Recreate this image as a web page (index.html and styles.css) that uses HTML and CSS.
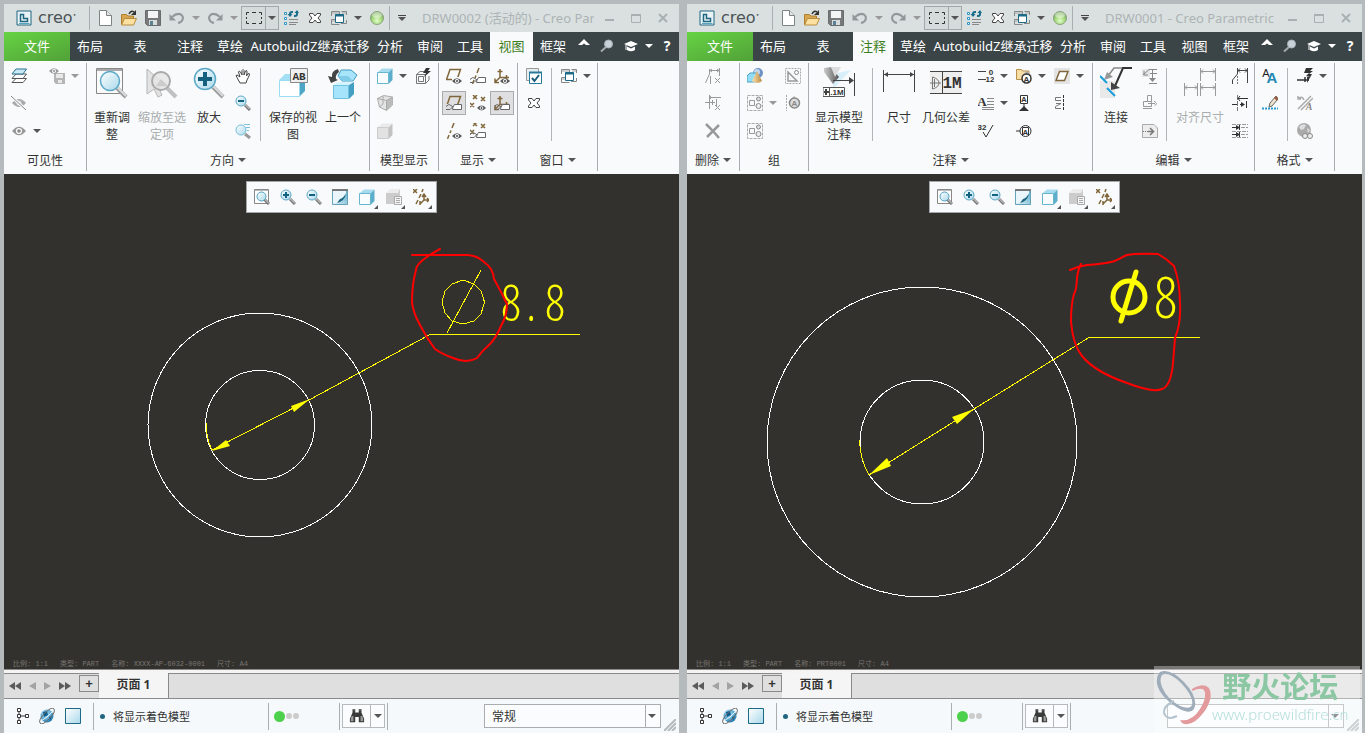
FILE: index.html
```html
<!DOCTYPE html>
<html lang="zh-CN">
<head>
<meta charset="utf-8">
<title>Creo Parametric</title>
<link rel="stylesheet" href="styles.css">
</head>
<body>
<svg class="sprite" aria-hidden="true">
<defs>
<linearGradient id="gBlue" x1="0" y1="0" x2="1" y2="1"><stop offset="0" stop-color="#fff"/><stop offset="1" stop-color="#a9d8ea"/></linearGradient>
<linearGradient id="gTeal" x1="0" y1="1" x2="1" y2="0"><stop offset="0" stop-color="#e8f6fb"/><stop offset="1" stop-color="#4fa5c4"/></linearGradient>
<radialGradient id="gBall" cx=".5" cy=".7" r=".6"><stop offset="0" stop-color="#e4fbd0"/><stop offset=".6" stop-color="#a5db7c"/><stop offset="1" stop-color="#7fae66"/></radialGradient>
<radialGradient id="gGlobe" cx=".4" cy=".35" r=".7"><stop offset="0" stop-color="#b7e8fa"/><stop offset="1" stop-color="#1c77b0"/></radialGradient>
<linearGradient id="gCone" x1="0" x2="1"><stop offset="0" stop-color="#fbe3b0"/><stop offset="1" stop-color="#b98a45"/></linearGradient>
<linearGradient id="gLamp" x1="0" x2="1"><stop offset="0" stop-color="#ccc"/><stop offset="1" stop-color="#555"/></linearGradient>
<symbol id="eye" viewBox="0 0 10 6"><path d="M0 3Q5-2.500 10 3Q5 8.500 0 3Z" fill="#5a5a5a"/><circle cx="5" cy="3" r="2" fill="#fff"/><circle cx="5" cy="3" r="1" fill="#444"/></symbol>
<symbol id="tag" viewBox="0 0 16 8"><path d="M0 3.500Q3 0 5 2.500T9 3M0 6.500H4L7 3.500" fill="none" stroke="#666"/><path d="M8.500 1.500H15.500V6.500H6.500L7 4Z" fill="#fff" stroke="#666"/></symbol>
<symbol id="i-logo" viewBox="0 0 16 16"><path d="M1 1H15V15H1Z" fill="#e9f3f6" stroke="#1f6580"/><path d="M4.500 4.500H7.500V8.500H11.500V11.500H4.500Z" fill="none" stroke="#1f6580" stroke-width="1.500"/><path d="M3 13.500H13.500" stroke="#58a3bd" fill="none"/></symbol>
<symbol id="i-new" viewBox="0 0 16 16"><path d="M2.500.5H9.500L14.500 5.500V15.500H2.500Z" fill="#fff" stroke="#7d8284"/><path d="M9.500.5V5.500H14.500" fill="#e4e7e8" stroke="#7d8284"/></symbol>
<symbol id="i-open" viewBox="0 0 16 16"><path d="M.5 14.500V4.500H5.500L7 6H12.500V9" fill="#d6a650" stroke="#b07f2c"/><path d="M.5 15L3.500 8.500H15.500L12.500 15Z" fill="#fbe0a0" stroke="#b98b3e"/><path d="M8 4Q10 0 13 2" fill="none" stroke="#333" stroke-width="1.500"/><path d="M15 0V5H10Z" fill="#333"/></symbol>
<symbol id="i-save" viewBox="0 0 16 16"><path d="M.5.5H15.500V15.500H2.500L.5 13.500Z" fill="#77797a" stroke="#696b6c"/><path d="M3 1H13V8H3Z" fill="#f3f4f4"/><path d="M4 10H12V15H4Z" fill="#d8dbdc"/><path d="M5 11H8V15H5Z" fill="#5b8195"/></symbol>
<symbol id="i-undo" viewBox="0 0 16 16"><path d="M3 7Q8 2.500 12 4.500C15.500 7 14 12 9 13" fill="none" stroke="#92989a" stroke-width="2"/><path d="M.5 4V10.500H7Z" fill="#92989a"/></symbol>
<symbol id="i-redo" viewBox="0 0 16 16"><path d="M13 7Q8 2.500 4 4.500C.5 7 2 12 7 13" fill="none" stroke="#92989a" stroke-width="2"/><path d="M15.500 4V10.500H9Z" fill="#92989a"/></symbol>
<symbol id="i-marquee" viewBox="0 0 16 16"><path d="M.5 5V2.500H3M6 2.500H10M13 2.500H15.500V5M15.500 7V9M15.500 11V13.500H13M10 13.500H6M3 13.500H.5V11M.5 9V7" fill="none" stroke="#333"/></symbol>
<symbol id="i-regen" viewBox="0 0 16 16"><path d="M1.500 2.500H3.500V4.500H1.500ZM1.500 7.500H3.500V9.500H1.500ZM1.500 12.500H3.500V14.500H1.500Z" fill="#fff" stroke="#2d96c5"/><path d="M6 9.500H15M6 12.500H15M6 14.500H13" stroke="#888"/><path d="M7 6V4Q7 2 9 2H10M14 2V4Q14 6 12 6H11" fill="none" stroke="#186d8c" stroke-width="2"/><path d="M4.500 4H9.500L7 7ZM11.500 3H16L14 0Z" fill="#186d8c"/></symbol>
<symbol id="i-xout" viewBox="0 0 16 16"><path d="M2.500 3.500H6L8 6L10 3.500H13.500V5L11 8L13.500 11V12.500H10L8 10L6 12.500H2.500V11L5 8L2.500 5Z" fill="#fff" stroke="#444"/></symbol>
<symbol id="i-wins" viewBox="0 0 16 16"><path d="M.5 6V1.500H8.500V4M10.500 1.500H15.500V5M.5 9.500V14.500H8.500M.5 9.500H4M15.500 10V13.500H10" fill="none" stroke="#888"/><path d="M1 3H8M11 3H15M1 11H4" stroke="#aaa" fill="none"/><path d="M4.500 4.500H12.500V12.500H4.500Z" fill="#fff" stroke="#1c6a85"/><path d="M4 5.500H13" stroke="#1c6a85" stroke-width="2"/></symbol>
<symbol id="i-ball" viewBox="0 0 16 16"><circle cx="8" cy="8" r="6.500" fill="url(#gBall)" stroke="#8aa47c"/><ellipse cx="8" cy="5" rx="5" ry="3" fill="#fff" opacity=".45"/></symbol>
<symbol id="i-min" viewBox="0 0 16 16"><path d="M4 9H13V11H4Z" fill="#a9b0b2"/></symbol>
<symbol id="i-max" viewBox="0 0 16 16"><path d="M3.500 4.500H12.500V12.500H3.500Z" fill="none" stroke="#a9b0b2"/><path d="M3 5H13" stroke="#a9b0b2" stroke-width="2"/></symbol>
<symbol id="i-close" viewBox="0 0 16 16"><path d="M4 4L12 12M12 4L4 12" stroke="#a9b0b2" stroke-width="2"/></symbol>
<symbol id="i-caret" viewBox="0 0 16 16"><path d="M2 9L8 3L14 9H10L8 7.500L6 9Z" fill="#fff"/></symbol>
<symbol id="i-search" viewBox="0 0 16 16"><path d="M7 9L2 13.500" stroke="#a5abac" stroke-width="2"/><circle cx="9.500" cy="6" r="4" fill="#c8d3d9" stroke="#a9b1b5"/></symbol>
<symbol id="i-hat" viewBox="0 0 16 16"><path d="M1 6L8 3L15 6L8 9Z" fill="#fff"/><path d="M4 8.500V12Q8 14.500 12 12V8.500L8 10.500Z" fill="#fff"/><path d="M3 7V12" stroke="#fff"/></symbol>
<symbol id="i-layers" viewBox="0 0 16 16"><path d="M1 14.500L5 10.500H15.500L12 14.500Z" fill="#fff" stroke="#555"/><path d="M1 10.500L5 6H15.500L12 10.500Z" fill="#fff" stroke="#555"/><path d="M1 6L5 1H15.500L12 6Z" fill="#c8e9f6" stroke="#2a6f8d"/></symbol>
<symbol id="i-eyesave" viewBox="0 0 16 16"><path d="M5 5H16V16H7L5 14Z" fill="#b5b5b5"/><path d="M7 6H14V10H7ZM9 12H13V15H9Z" fill="#e9e9e9"/><use href="#eye" width="10" height="6" opacity=".6"/></symbol>
<symbol id="i-eye" viewBox="0 0 16 16"><path d="M1 8Q8-.5 15 8Q8 16.500 1 8Z" fill="#999"/><circle cx="8" cy="8" r="3" fill="#fff"/><circle cx="8" cy="8" r="1.800" fill="#888"/></symbol>
<symbol id="i-eyeoff" viewBox="0 0 16 16"><path d="M1 8Q8 0 15 8Q8 16 1 8Z" fill="#aaa"/><circle cx="8" cy="8" r="2.500" fill="#ddd"/><path d="M0 1L15 15" stroke="#f8fafb" stroke-width="3"/><path d="M0 1L15 15" stroke="#888"/></symbol>
<symbol id="i-hand" viewBox="0 0 16 16"><path d="M5 15L2 9.500Q0 7 2 7L5 9L3.500 4Q4 2 5.500 4L7 7V2.500Q8 .5 9 2.500V7L10.500 3Q12 1.500 12 4L11.500 8L13 5.500Q15.500 5 14 8L12 12L11 15Z" fill="#fff" stroke="#444"/></symbol>
<symbol id="i-zoomin" viewBox="0 0 16 16"><path d="M10 10L15 15" stroke="#777" stroke-width="3"/><path d="M10 9.500L15 14.500" stroke="#e0e0e0"/><circle cx="6" cy="6" r="5" fill="url(#gBlue)" stroke="#5ca8c7"/><path d="M6 3V9M3 6H9" stroke="#12637f" stroke-width="2"/></symbol>
<symbol id="i-zoomout" viewBox="0 0 16 16"><path d="M10 10L15 15" stroke="#777" stroke-width="3"/><path d="M10 9.500L15 14.500" stroke="#e0e0e0"/><circle cx="6" cy="6" r="5" fill="url(#gBlue)" stroke="#5ca8c7"/><path d="M3 6H9" stroke="#12637f" stroke-width="2"/></symbol>
<symbol id="i-pan" viewBox="0 0 16 16"><path d="M10 11L15 15" stroke="#999" stroke-width="3"/><circle cx="6" cy="7" r="5" fill="url(#gBlue)" stroke="#74bfdb"/><path d="M9 1.500H15M11 4.500H15M12 7.500H14" stroke="#7cc0db"/></symbol>
<symbol id="i-refit" viewBox="0 0 16 16"><path d="M.5.5H14.500V14.500H.5Z" fill="#fff" stroke="#888"/><path d="M1 1.500H14" stroke="#bbb"/><path d="M10 10L15 15" stroke="#777" stroke-width="3"/><path d="M10 9.500L15 14.500" stroke="#e0e0e0"/><circle cx="7.500" cy="7.500" r="4.500" fill="url(#gBlue)" stroke="#4fa0c0"/></symbol>
<symbol id="i-refit32" viewBox="0 0 32 32"><path d="M.5 1.500H26.500V26.500H.5Z" fill="#fbfbfb" stroke="#888"/><path d="M1 3H26" stroke="#aaa" stroke-width="2"/><path d="M20 20L30 30" stroke="#9b9b9b" stroke-width="4"/><path d="M20 19L30 29" stroke="#dcdcdc" stroke-width="2"/><circle cx="14" cy="14" r="9.500" fill="url(#gBlue)" stroke="#5ca8c7" stroke-width="1.500"/></symbol>
<symbol id="i-zoomsel32" viewBox="0 0 32 32"><path d="M1 2L20 19L12 20L16 28L12 30L8 22L1 27Z" fill="#e3e3e3" stroke="#b5b5b5"/><path d="M21 21L30 30" stroke="#c1c1c1" stroke-width="4"/><circle cx="15" cy="14" r="9" fill="#e5e5e5" fill-opacity=".8" stroke="#aaa" stroke-width="2"/><path d="M15 12L22 19H10Z" fill="#ccc"/></symbol>
<symbol id="i-zoomin32" viewBox="0 0 32 32"><path d="M20 20L30 30" stroke="#9b9b9b" stroke-width="4"/><path d="M20 19L30 29" stroke="#dcdcdc" stroke-width="2"/><circle cx="12" cy="12" r="10.500" fill="url(#gBlue)" stroke="#5ca8c7" stroke-width="1.500"/><path d="M12 5V19M5 12H19" stroke="#14607f" stroke-width="4"/></symbol>
<symbol id="i-saved32" viewBox="0 0 32 32"><path d="M2 13L8 7H28L22 13Z" fill="#a5dff5"/><path d="M22 13L28 7V24L22 30Z" fill="#4fa5c4"/><path d="M2.500 13.500H22.500V29.500H2.500Z" fill="#fff" stroke="#9adcf3"/><path d="M13.500 1.500H30.500V15.500H13.500Z" fill="#f0f0f0" stroke="#888"/><text x="22" y="13" text-anchor="middle" class="mono-b">AB</text></symbol>
<symbol id="i-prev32" viewBox="0 0 32 32"><path d="M11 2Q4 4 5 10L1 9L4 16L11 13L9 12Q8 8 12 5Z" fill="#444"/><path d="M14 3H24L30 8L26 14H15L11 9Z" fill="#a8e4fa" stroke="#3b9cc0"/><path d="M15 14L11 9H21L26 14" fill="#7fcdea"/><path d="M6 18L11 15H26L22 18Z" fill="#d4f3fd"/><path d="M6.500 18.500H21.500V31.500H6.500Z" fill="#a5e4fb" stroke="#6fc2e0"/><path d="M22 18L27 15V27L22 32Z" fill="#459fc2"/></symbol>
<symbol id="i-cube" viewBox="0 0 16 16"><path d="M1 4L5 .5H15.500L12 4Z" fill="#a6dbf0"/><path d="M12 4L15.500.5V12L12 15.500Z" fill="#5caecb"/><path d="M.5 4.500H11.500V15.500H.5Z" fill="#fafdff" stroke="#68b5d0"/></symbol>
<symbol id="i-graycube" viewBox="0 0 16 16"><path d="M1 4L5 .5H15.500L12 4Z" fill="#eaeaea"/><path d="M12 4L15.500.5V12L12 15.500Z" fill="#c2c2c2"/><path d="M.5 4.500H11.500V15.500H.5Z" fill="#e2e2e2" stroke="#ccc"/></symbol>
<symbol id="i-wirecube" viewBox="0 0 16 16"><path d="M.5 3.500L6.500.5L15.500 2V10L9.500 15.500L2.500 12Z" fill="#e4e4e4" stroke="#aaa"/><path d="M9.500 5.500L15.500 2V10L9.500 15.500Z" fill="#bbb"/><path d="M.5 3.500L9.500 5.500L15.500 2M9.500 5.500V15.500M6 1V9L2.500 12" fill="none" stroke="#aaa"/></symbol>
<symbol id="i-flashcube" viewBox="0 0 16 16"><path d="M1.500 6.500H10.500V15.500H1.500ZM1.500 6.500L5 3.500H9M10.500 15.500L14 12V8M3.500 8.500H8.500V13.500H3.500Z" fill="none" stroke="#777"/><path d="M11 0H15L13 3H16L9 9L11 5H8Z" fill="#333"/></symbol>
<symbol id="plane" viewBox="0 0 16 16"><path d="M.5 11.500L4 1.500H14.500L11 11.500Z" fill="none" stroke="#80663a" stroke-width="1.500"/></symbol>
<symbol id="axis" viewBox="0 0 16 16"><path d="M7 0L5 5M4 7.500L3 10M2 12L.5 16" stroke="#80663a" stroke-width="1.500"/></symbol>
<symbol id="csys" viewBox="0 0 16 16"><path d="M6 9.500V1M3.500 3.500H8.500M6 9.500H15M12.500 7V12M6 9.500L1 14M1 10.500V14.500H5" fill="none" stroke="#80663a" stroke-width="1.500"/></symbol>
<symbol id="pts" viewBox="0 0 16 16"><path d="M3 0L7 4M7 0L3 4M11 2L15 6M15 2L11 6M0 8L4 12M4 8L0 12" stroke="#80663a" stroke-width="1.500"/></symbol>
<symbol id="i-plane-eye" viewBox="0 0 16 16"><use href="#plane"/><rect x="6" y="9" width="10" height="7" fill="#f8fafb"/><use href="#eye" x="6" y="10" width="10" height="6"/></symbol>
<symbol id="i-plane-tag" viewBox="0 0 16 16"><use href="#plane"/><rect y="9" width="16" height="7" fill="#dfdfe1"/><use href="#tag" y="8" width="16" height="8"/></symbol>
<symbol id="i-axis-tag" viewBox="0 0 16 16"><use href="#axis" x="2"/><use href="#tag" y="8" width="16" height="8"/></symbol>
<symbol id="i-axis-eye" viewBox="0 0 16 16"><use href="#axis" x="1"/><use href="#eye" x="6" y="10" width="10" height="6"/></symbol>
<symbol id="i-csys-eye" viewBox="0 0 16 16"><use href="#csys"/><use href="#eye" x="6" y="10" width="10" height="6"/></symbol>
<symbol id="i-csys-tag" viewBox="0 0 16 16"><use href="#csys"/><use href="#tag" y="8" width="16" height="8"/></symbol>
<symbol id="i-pts-eye" viewBox="0 0 16 16"><use href="#pts"/><use href="#eye" x="7" y="10" width="9" height="6"/></symbol>
<symbol id="i-pts-tag" viewBox="0 0 16 16"><use href="#pts" y="-1"/><use href="#tag" y="8" width="16" height="8"/></symbol>
<symbol id="i-chkwin" viewBox="0 0 16 16"><path d="M.5.5H12.500V12.500H.5Z" fill="#e7eef1" stroke="#999"/><path d="M3.500 4.500H15.500V15.500H3.500Z" fill="#fff" stroke="#27799a"/><path d="M3 4.500H16" stroke="#27799a" stroke-width="2"/><path d="M6 10L8.500 13L13 7" fill="none" stroke="#1c5f7c" stroke-width="2"/></symbol>
<symbol id="i-shade" viewBox="0 0 16 16"><path d="M0 0H16V16H0Z" fill="url(#gTeal)"/><path d="M0 2H14V5L6 14H0Z" fill="#eaf6fb"/><path d="M14 4Q12 9 8 10L5 14Q13 12 14 4Z" fill="#1f6580"/><path d="M.5.5H15.500V15.500H.5Z" fill="none" stroke="#66a2ba"/><path d="M0 1H16" stroke="#777" stroke-width="2"/></symbol>
<symbol id="i-docgray" viewBox="0 0 16 16"><path d="M0 4L4 0H14L12 4Z" fill="#ececec"/><path d="M0 4H12V15H0ZM12 4L14 0V8H12Z" fill="#ccc"/><path d="M8.500 7.500H15.500V15.500H8.500Z" fill="#f5f5f5" stroke="#aaa"/><path d="M10 9.500H14M10 11.500H14M10 13.500H14" stroke="#aaa"/></symbol>
<symbol id="i-datum" viewBox="0 0 16 16"><path d="M0 0L4 4M4 0L0 4M10 0L9 3M8 5L6 9M5 11L3 15M11 6V11M9 8L11 5L13 8M11 11H16M14 9L16 11L14 13M11 11L7 15M7 12V16" fill="none" stroke="#80663a" stroke-width="1.500"/></symbol>
<symbol id="i-del1" viewBox="0 0 16 16"><path d="M4.500 1V6L.5 15M5.500 8V16M14.500 0V8M5 2.500H14M5 2.500L7 1M5 2.500L7 4M14 2.500L12 1M14 2.500L12 4M10 10L15 15M15 10L10 15" fill="none" stroke="#999"/></symbol>
<symbol id="i-del2" viewBox="0 0 16 16"><path d="M4 2.500H16M4.500 0V14M0 7.500H10M7.500 5V10M11.500 4V11M4 2.500L6 1M4 2.500L6 4M10 10L15 15M15 10L10 15" fill="none" stroke="#999"/></symbol>
<symbol id="i-delx" viewBox="0 0 16 16"><path d="M1 1L8 8L14 15M14 2L2 14" stroke="#999" stroke-width="2.500"/></symbol>
<symbol id="i-shapes" viewBox="0 0 16 16"><circle cx="11" cy="5" r="5" fill="#6f93c5"/><circle cx="10" cy="4" r="3" fill="#c2d8f1"/><path d="M0 8L3 5H10V12L8 14H0Z" fill="#92dcf4" stroke="#48a4c8"/><path d="M10 3L15 13Q10 17 5 13Z" fill="url(#gCone)"/></symbol>
<symbol id="i-trigroup" viewBox="0 0 16 16"><path d="M.5.5H15.500V15.500H.5Z" fill="none" stroke="#aaa" stroke-dasharray="2 1"/><path d="M3 4V13H12Z" fill="none" stroke="#999" stroke-width="1.500"/><circle cx="11.500" cy="4.500" r="2" fill="none" stroke="#888"/></symbol>
<symbol id="i-grp" viewBox="0 0 16 16"><path d="M.5.5H15.500V15.500H.5Z" fill="none" stroke="#aaa" stroke-dasharray="3 1"/><path d="M2.500 5.500H7.500V10.500H2.500Z" fill="none" stroke="#999"/><circle cx="11.500" cy="4" r="2" fill="#ddd" stroke="#888"/><circle cx="11.500" cy="11" r="2.500" fill="#eee" stroke="#888"/></symbol>
<symbol id="i-grpA" viewBox="0 0 16 16"><path d="M1.500 0V16" stroke="#aaa" stroke-dasharray="2 1"/><path d="M3 7.500L9 1L15 7.500Z" fill="#bbb"/><circle cx="9.500" cy="8" r="5" fill="#ddd" stroke="#888" stroke-width="1.500"/><text x="9.500" y="11" text-anchor="middle" class="tiny g">A</text></symbol>
<symbol id="i-model32" viewBox="0 0 32 32"><path d="M10 7L28 3L10 22Z" fill="#d8effa"/><path d="M1 1L8 0L16 10L10 17L1 5Z" fill="url(#gLamp)"/><path d="M8 0H18L12 10Z" fill="#ddd"/><path d="M10 13.500H30M31.500 6V29" stroke="#444"/><path d="M26 10L31 13.500L26 17Z" fill="#444"/><path d="M0 20.500H21.500V29.500H0ZM6.500 20V30" fill="#fff" stroke="#555"/><path d="M1 25H6M3 22V28" stroke="#444" stroke-width="2"/><text x="14" y="28" text-anchor="middle" class="tiny">.1M</text></symbol>
<symbol id="i-dim32" viewBox="0 0 32 32"><path d="M.5 3V25M31.500 3V25M1 7.500H31" stroke="#444"/><path d="M1 7.500L5 5V10ZM31 7.500L27 5V10Z" fill="#444"/></symbol>
<symbol id="i-gtol32" viewBox="0 0 32 32"><path d="M0 4.500H32V26.500H0Z" fill="#eee"/><path d="M0 4.500H32M0 26.500H32M12.500 4V27" stroke="#444"/><path d="M2.500 10V22Q9 20 9 16T2.500 10M0 16H11M4.500 12V20" fill="none" stroke="#777"/><text x="22" y="21" text-anchor="middle" class="mono-b wide-m">1M</text></symbol>
<symbol id="i-ord" viewBox="0 0 16 16"><path d="M0 3.500H8M0 11.500H8" stroke="#444"/><text x="13" y="7" text-anchor="middle" class="tiny">0</text><text x="12" y="14" text-anchor="middle" class="tiny">12</text></symbol>
<symbol id="i-note" viewBox="0 0 16 16"><text x="4" y="11" text-anchor="middle" class="serifA">A</text><path d="M9 3.500H16M9 6.500H16M9 9.500H16M4 12.500H16M4 14.500H16" stroke="#888"/></symbol>
<symbol id="i-surf" viewBox="0 0 16 16"><path d="M5 9L8 14L15 2" fill="none" stroke="#333"/><text x="4" y="7" text-anchor="middle" class="tiny">32</text></symbol>
<symbol id="i-folderA" viewBox="0 0 16 16"><path d="M.5 11.500V1.500H5L7 3H13V11.500Z" fill="#f6dca5" stroke="#b98f4a"/><path d="M5 8L11 3L16 8Z" fill="#aaa"/><circle cx="10.500" cy="10.500" r="4.500" fill="#fff" stroke="#333" stroke-width="1.500"/><text x="10.500" y="13.500" text-anchor="middle" class="tiny">A</text></symbol>
<symbol id="i-abox" viewBox="0 0 16 16"><path d="M4.500.5H11.500V8.500H4.500Z" fill="#fff" stroke="#333"/><path d="M8 8V13" stroke="#333"/><path d="M3 16L8 11L13 16Z" fill="#333"/><text x="8" y="7" text-anchor="middle" class="tiny">A</text></symbol>
<symbol id="i-circa" viewBox="0 0 16 16"><path d="M0 8H4" stroke="#333"/><circle cx="9.500" cy="8" r="5.500" fill="#fff" stroke="#333"/><path d="M6.500 12V4.500H12.500V12" fill="none" stroke="#333"/><text x="9.500" y="12" text-anchor="middle" class="tiny">A</text></symbol>
<symbol id="i-plane" viewBox="0 0 16 16"><path d="M0 0H16V16H0Z" fill="#e4e4e4"/><path d="M2 12.500L5.500 3.500H14L10.500 12.500Z" fill="#fff" stroke="#80663a" stroke-width="1.500"/></symbol>
<symbol id="i-break" viewBox="0 0 16 16"><path d="M7 2.500H1.500V5.500H7M2 8.500H7M7 13.500H1.500V11.500L7 8.500" fill="none" stroke="#777"/><path d="M9.500 0V16" stroke="#333" stroke-dasharray="3 1"/></symbol>
<symbol id="i-attach32" viewBox="0 0 32 32"><path d="M0 14H15V31H0Z" fill="#e9e9ea"/><path d="M25 1H14L8 9" fill="none" stroke="#888" stroke-width="1.500"/><path d="M32 1H23L15 19" fill="none" stroke="#333" stroke-width="2"/><path d="M4 13L7 5L13 10Z" fill="#999"/><path d="M11 23L11 15L20 21Z" fill="#444"/><path d="M0 9L7 16M7 21L15 29" stroke="#1a9edb" stroke-width="2"/></symbol>
<symbol id="i-e1" viewBox="0 0 16 16"><path d="M0 1H8V9H0Z" fill="#e5e5e5"/><path d="M1 7L7 1.500H15M2 3V7H6M10.500 2V13M8 5.500H15M7 15.500H15" fill="none" stroke="#888"/><path d="M7 10H14L10.500 14Z" fill="#888"/></symbol>
<symbol id="i-e2" viewBox="0 0 16 16"><path d="M5.500 6V.5H9.500V6M1.500 6.500H9.500V11.500H1.500ZM1 13.500H10" fill="none" stroke="#999"/><path d="M6 8.500H14M12 6L15 8.500L12 11" fill="none" stroke="#999" stroke-dasharray="3 1"/></symbol>
<symbol id="i-e3" viewBox="0 0 16 16"><path d="M.5 1.500H12L15.500 5V14.500H.5Z" fill="#ededed" stroke="#aaa"/><path d="M1 8.500H6" stroke="#777" stroke-dasharray="1 1"/><path d="M6 8.500H11M8 5L11.500 8.500L8 12" fill="none" stroke="#777" stroke-width="1.500"/></symbol>
<symbol id="i-align32" viewBox="0 0 32 32"><path d="M16.500 1V14M31.500 1V14M17 4.500H31M.5 16V29M13.500 16V29M1 20.500H13M16.500 16V29M31.500 16V29M17 20.500H31M19 2.500L17 4.500L19 6.500M29 2.500L31 4.500L29 6.500M3 18.500L1 20.500L3 22.500M11 18.500L13 20.500L11 22.500M19 18.500L17 20.500L19 22.500M29 18.500L31 20.500L29 22.500" fill="none" stroke="#999"/></symbol>
<symbol id="i-a1" viewBox="0 0 16 16"><path d="M5.500 0V6L.5 12V16M15.500 0V15M6 2.500H15M8 .5L6 2.500L8 4.500M13 .5L15 2.500L13 4.500" fill="none" stroke="#444"/><path d="M5.500 8V16" stroke="#777" stroke-dasharray="2 1"/></symbol>
<symbol id="i-a2" viewBox="0 0 16 16"><path d="M5.500 0V16" stroke="#777" stroke-dasharray="5 1"/><path d="M6 3.500H16M8 1L6 3.500L8 6M0 9.500H5M8 9.500H12M14.500 6V13" fill="none" stroke="#333"/><path d="M9 7L13 9.500L9 12Z" fill="#333"/></symbol>
<symbol id="i-a3" viewBox="0 0 16 16"><path d="M0 4.500H5M0 11.500H5M7.500 2V7M7.500 9V14" stroke="#333"/><path d="M4 2L8 4.500L4 7ZM4 9L8 11.500L4 14Z" fill="#333"/><path d="M0 1.500H16M9 4.500H16M0 8.500H16M9 11.500H16M0 14.500H16" stroke="#999" stroke-dasharray="4 1"/></symbol>
<symbol id="i-fontA" viewBox="0 0 16 16"><text x="4" y="9" text-anchor="middle" class="fa1">A</text><text x="10" y="15" text-anchor="middle" class="fa2">A</text></symbol>
<symbol id="i-pencil" viewBox="0 0 16 16"><path d="M0 13.500H16" stroke="#2b9ad0" stroke-width="2" stroke-dasharray="2 1"/><path d="M14 1L16 4L10 11L7 12L8 8Z" fill="#efe2cd" stroke="#666"/><path d="M12 3L15 6L16 3L14 1Z" fill="#9a5c45"/></symbol>
<symbol id="i-flash" viewBox="0 0 16 16"><path d="M0 12H12M8 9V14" stroke="#333" stroke-width="1.500"/><path d="M9 0H16L13 3H16L12 6H15L10 15V9H13L9 8L12 5H7Z" fill="#333"/></symbol>
<symbol id="i-fmt" viewBox="0 0 16 16"><path d="M1 1V4H4M1 4Q5 0 7 5M1 14L14 1M4 15L16 3" fill="none" stroke="#aaa" stroke-width="1.500"/><text x="12" y="15" text-anchor="middle" class="fa3">A</text></symbol>
<symbol id="i-globelink" viewBox="0 0 16 16"><circle cx="7" cy="7" r="7" fill="#aaa"/><path d="M2 4Q5 0 9 2L7 6L4 7ZM10 5L13 7L11 10Z" fill="#ddd"/><circle cx="8" cy="13" r="2.500" fill="#eee" stroke="#888"/><circle cx="13" cy="13" r="2.500" fill="#eee" stroke="#888"/></symbol>
<symbol id="i-tree" viewBox="0 0 16 16"><path d="M2.500.5H5.500V3.500H2.500ZM2.500 6.500H5.500V9.500H2.500ZM2.500 12.500H5.500V15.500H2.500ZM10.500 6.500H13.500V9.500H10.500Z" fill="#fff" stroke="#333"/><path d="M4 4V6M4 10V12M6 8H10" stroke="#333"/></symbol>
<symbol id="i-globe" viewBox="0 0 16 16"><circle cx="8" cy="8" r="6.500" fill="url(#gGlobe)"/><path d="M4 4L8 3L9 7L5 9ZM10 9L13 8L11 13Z" fill="#0d5c8c"/><path d="M1 15Q-1 12 6 5T15 1Q17 4 10 11T1 15Z" fill="none" stroke="#666"/><path d="M2 13Q8 10 14 3" fill="none" stroke="#e5f5fb"/></symbol>
<symbol id="i-square" viewBox="0 0 16 16"><path d="M.5.5H15.500V15.500H.5Z" fill="url(#gBlue)" stroke="#1e6a86"/></symbol>
<symbol id="i-binoc" viewBox="0 0 18 16"><path d="M4 1H7V4H11V1H14V4L17 11V15H11V9H7V15H1V11L4 4Z" fill="#3a3a3a"/><path d="M3 8H5V14H2V11ZM13 8H15L16 12V14H13Z" fill="#999"/><path d="M4 0H7V2H4ZM11 0H14V2H11Z" fill="#666"/></symbol>
<symbol id="i-first" viewBox="0 0 12 10"><path d="M6 1V9L0 5ZM12 1V9L6 5Z" fill="#5b5b5b"/></symbol>
<symbol id="i-back" viewBox="0 0 12 10"><path d="M9 1V9L2 5Z" fill="#a3a3a3"/></symbol>
<symbol id="i-fwd" viewBox="0 0 12 10"><path d="M3 1V9L10 5Z" fill="#a3a3a3"/></symbol>
<symbol id="i-last" viewBox="0 0 12 10"><path d="M0 1V9L6 5ZM6 1V9L12 5Z" fill="#5b5b5b"/></symbol>
</defs>
</svg>

<main class="desktop">
<section class="window" aria-label="DRW0002">
  <header class="titlebar">
    <svg class="ic logo"><use href="#i-logo"/></svg><span class="brand">creo<sup>•</sup></span><i class="sep"></i>
    <button class="ib" aria-label="新建"><svg class="ic"><use href="#i-new"/></svg></button>
    <button class="ib" aria-label="打开"><svg class="ic"><use href="#i-open"/></svg></button>
    <button class="ib" aria-label="保存"><svg class="ic"><use href="#i-save"/></svg></button>
    <button class="ib" aria-label="撤消"><svg class="ic"><use href="#i-undo"/></svg></button><button class="arr dim" aria-label="撤消列表"></button>
    <button class="ib" aria-label="重做"><svg class="ic"><use href="#i-redo"/></svg></button><button class="arr dim" aria-label="重做列表"></button>
    <span class="split"><button class="ib" aria-label="选择"><svg class="ic"><use href="#i-marquee"/></svg></button><button class="arr" aria-label="选择列表"></button></span>
    <button class="ib" aria-label="再生"><svg class="ic"><use href="#i-regen"/></svg></button>
    <button class="ib" aria-label="关闭"><svg class="ic"><use href="#i-xout"/></svg></button>
    <button class="ib" aria-label="窗口"><svg class="ic"><use href="#i-wins"/></svg></button><button class="arr" aria-label="窗口列表"></button>
    <button class="ib" aria-label="状态"><svg class="ic"><use href="#i-ball"/></svg></button><i class="sep"></i>
    <button class="arr more" aria-label="自定义"></button>
    <h1 class="caption">DRW0002 (活动的) - Creo Parametric</h1>
    <button class="wb" aria-label="最小化"><svg class="ic"><use href="#i-min"/></svg></button>
    <button class="wb" aria-label="最大化"><svg class="ic"><use href="#i-max"/></svg></button>
    <button class="wb" aria-label="关闭窗口"><svg class="ic"><use href="#i-close"/></svg></button>
  </header>
  <nav class="menu">
    <button class="file">文件</button><button>布局</button><button class="wide">表</button><button>注释</button><button>草绘</button><button class="plugin">AutobuildZ继承迁移</button><button>分析</button><button>审阅</button><button>工具</button><button class="active view">视图</button><button>框架</button>
    <span class="tools"><button class="fold" aria-label="折叠"><svg class="ic"><use href="#i-caret"/></svg></button><button class="round" aria-label="搜索"><svg class="ic"><use href="#i-search"/></svg></button><button class="round" aria-label="学习"><svg class="ic"><use href="#i-hat"/></svg></button><button class="arr light" aria-label="学习列表"></button><button class="round help">?</button></span>
  </nav>
  <div class="ribbon">
    <section class="group g-vis">
      <div class="body">
        <div class="col"><div class="row"><button class="ib" aria-label="层"><svg class="ic"><use href="#i-layers"/></svg></button></div><div class="row"><button class="ib" aria-label="隐藏"><svg class="ic"><use href="#i-eyeoff"/></svg></button></div><div class="row"><button class="ib" aria-label="显示"><svg class="ic"><use href="#i-eye"/></svg></button><button class="arr" aria-label="显示列表"></button></div></div>
        <div class="col"><div class="row"><button class="ib" aria-label="保存状况"><svg class="ic"><use href="#i-eyesave"/></svg></button><button class="arr dim" aria-label="状况列表"></button></div></div>
      </div>
      <span class="label">可见性</span>
    </section>
    <section class="group g-orient">
      <div class="body">
        <button class="big narrow"><svg class="ic32"><use href="#i-refit32"/></svg><span>重新调整</span></button>
        <button class="big off"><svg class="ic32"><use href="#i-zoomsel32"/></svg><span>缩放至选定项</span></button>
        <button class="big slim"><svg class="ic32"><use href="#i-zoomin32"/></svg><span>放大</span></button>
        <div class="col"><div class="row"><button class="ib" aria-label="平移"><svg class="ic"><use href="#i-hand"/></svg></button></div><div class="row"><button class="ib" aria-label="缩小"><svg class="ic"><use href="#i-zoomout"/></svg></button></div><div class="row"><button class="ib" aria-label="平移缩放"><svg class="ic"><use href="#i-pan"/></svg></button></div></div>
        <i class="vsep"></i>
        <button class="big"><svg class="ic32"><use href="#i-saved32"/></svg><span>保存的视图</span></button>
        <button class="big"><svg class="ic32"><use href="#i-prev32"/></svg><span>上一个</span></button>
      </div>
      <button class="label drop">方向</button>
    </section>
    <section class="group g-model">
      <div class="body">
        <div class="col"><div class="row"><button class="ib" aria-label="着色"><svg class="ic"><use href="#i-cube"/></svg></button><button class="arr" aria-label="样式列表"></button></div><div class="row"><button class="ib" aria-label="透视图"><svg class="ic"><use href="#i-wirecube"/></svg></button></div><div class="row"><button class="ib" aria-label="截面"><svg class="ic"><use href="#i-graycube"/></svg></button></div></div>
        <div class="col"><div class="row"><button class="ib" aria-label="重画"><svg class="ic"><use href="#i-flashcube"/></svg></button></div></div>
      </div>
      <span class="label">模型显示</span>
    </section>
    <section class="group g-show">
      <div class="body">
        <div class="col"><div class="row"><button class="ib" aria-label="平面显示"><svg class="ic"><use href="#i-plane-eye"/></svg></button></div><div class="row"><button class="ib on" aria-label="平面标记"><svg class="ic"><use href="#i-plane-tag"/></svg></button></div><div class="row"><button class="ib" aria-label="轴显示"><svg class="ic"><use href="#i-axis-eye"/></svg></button></div></div>
        <div class="col"><div class="row"><button class="ib" aria-label="轴标记"><svg class="ic"><use href="#i-axis-tag"/></svg></button></div><div class="row"><button class="ib" aria-label="点显示"><svg class="ic"><use href="#i-pts-eye"/></svg></button></div><div class="row"><button class="ib" aria-label="点标记"><svg class="ic"><use href="#i-pts-tag"/></svg></button></div></div>
        <div class="col"><div class="row"><button class="ib" aria-label="坐标系显示"><svg class="ic"><use href="#i-csys-eye"/></svg></button></div><div class="row"><button class="ib on" aria-label="坐标系标记"><svg class="ic"><use href="#i-csys-tag"/></svg></button></div></div>
      </div>
      <button class="label drop">显示</button>
    </section>
    <section class="group g-win">
      <div class="body">
        <div class="col"><div class="row"><button class="ib" aria-label="激活"><svg class="ic"><use href="#i-chkwin"/></svg></button></div><div class="row"><button class="ib" aria-label="关闭"><svg class="ic"><use href="#i-xout"/></svg></button></div></div>
        <i class="vsep"></i>
        <div class="col"><div class="row"><button class="ib" aria-label="窗口"><svg class="ic"><use href="#i-wins"/></svg></button><button class="arr" aria-label="窗口列表"></button></div></div>
      </div>
      <button class="label drop">窗口</button>
    </section>
  </div>
  <div class="canvas">
    <svg class="drawing" role="img" aria-label="直径 8.8">
      <g fill="none" stroke="#fff" shape-rendering="crispEdges"><circle cx="256" cy="251" r="112"/><circle cx="256" cy="251" r="54.500"/></g>
      <g fill="none" stroke="#ff0" shape-rendering="crispEdges"><path d="M202 249Q202 264 208 276L305 226L426 160.500H576"/><path d="M459 106L470 110L477 117L480.500 128L477 140L470 147L459 150L448 147L441 139L438 128L441 117L448 110ZM477 96L443 159"/></g>
      <path d="M208 277L222 266L226 272ZM306 225L287 232L290 238Z" fill="#ff0"/>
      <text class="dim-text" y="147" x="497 522 541">8.8</text>
      <path d="M408 81H464Q474 82 480 88Q489 94 490 105L497 118L503 130Q503 142 497 152Q492 164 486 170Q478 177 473 184Q463 190 449 184Q438 180 431 175Q420 160 412 143Q408 132 408 128Q408 110 412 96Q412 88 436 75" fill="none" stroke="#f00" stroke-width="2" stroke-linecap="round"/>
    </svg>
    <div class="float">
      <button aria-label="重新调整"><svg class="ic"><use href="#i-refit"/></svg></button><button aria-label="放大"><svg class="ic"><use href="#i-zoomin"/></svg></button><button aria-label="缩小"><svg class="ic"><use href="#i-zoomout"/></svg></button><button aria-label="重画"><svg class="ic"><use href="#i-shade"/></svg></button><button class="menu-mark" aria-label="显示样式"><svg class="ic"><use href="#i-cube"/></svg></button><button class="menu-mark" aria-label="视图管理"><svg class="ic"><use href="#i-docgray"/></svg></button><button class="menu-mark" aria-label="基准显示"><svg class="ic"><use href="#i-datum"/></svg></button>
    </div>
    <p class="meta"><span>比例: 1:1</span><span>类型: PART</span><span>名称: XXXX-AP-6032-0001</span><span>尺寸: A4</span></p>
  </div>
  <div class="sheets">
    <button aria-label="第一页"><svg><use href="#i-first"/></svg></button><button aria-label="上一页"><svg><use href="#i-back"/></svg></button><button aria-label="下一页"><svg><use href="#i-fwd"/></svg></button><button aria-label="最后页"><svg><use href="#i-last"/></svg></button>
    <button class="plus">+</button><button class="sheet">页面 1</button>
  </div>
  <footer class="status">
    <button class="ib" aria-label="导航器"><svg class="ic"><use href="#i-tree"/></svg></button><button class="ib" aria-label="浏览器"><svg class="ic"><use href="#i-globe"/></svg></button><button class="ib sq" aria-label="全屏"><svg class="ic"><use href="#i-square"/></svg></button><i class="sep"></i>
    <p class="msg">将显示着色模型</p><i class="sep"></i>
    <span class="lights"><i></i><i></i><i></i></span><i class="sep"></i>
    <span class="find"><button class="ib" aria-label="查找"><svg class="ic"><use href="#i-binoc"/></svg></button><button class="arr" aria-label="查找列表"></button></span><i class="sep"></i>
    <label class="filter"><select aria-label="过滤器"><option>常规</option></select></label>
    <svg class="grip"><path d="M0 12L12 0M4 12L12 4M8 12L12 8" stroke="#b3b9bc" stroke-width="2"/></svg>
  </footer>
</section>

<section class="window" aria-label="DRW0001">
  <header class="titlebar">
    <svg class="ic logo"><use href="#i-logo"/></svg><span class="brand">creo<sup>•</sup></span><i class="sep"></i>
    <button class="ib" aria-label="新建"><svg class="ic"><use href="#i-new"/></svg></button>
    <button class="ib" aria-label="打开"><svg class="ic"><use href="#i-open"/></svg></button>
    <button class="ib" aria-label="保存"><svg class="ic"><use href="#i-save"/></svg></button>
    <button class="ib" aria-label="撤消"><svg class="ic"><use href="#i-undo"/></svg></button><button class="arr dim" aria-label="撤消列表"></button>
    <button class="ib" aria-label="重做"><svg class="ic"><use href="#i-redo"/></svg></button><button class="arr dim" aria-label="重做列表"></button>
    <span class="split"><button class="ib" aria-label="选择"><svg class="ic"><use href="#i-marquee"/></svg></button><button class="arr" aria-label="选择列表"></button></span>
    <button class="ib" aria-label="再生"><svg class="ic"><use href="#i-regen"/></svg></button>
    <button class="ib" aria-label="关闭"><svg class="ic"><use href="#i-xout"/></svg></button>
    <button class="ib" aria-label="窗口"><svg class="ic"><use href="#i-wins"/></svg></button><button class="arr" aria-label="窗口列表"></button>
    <button class="ib" aria-label="状态"><svg class="ic"><use href="#i-ball"/></svg></button><i class="sep"></i>
    <button class="arr more" aria-label="自定义"></button>
    <h1 class="caption">DRW0001 - Creo Parametric</h1>
    <button class="wb" aria-label="最小化"><svg class="ic"><use href="#i-min"/></svg></button>
    <button class="wb" aria-label="最大化"><svg class="ic"><use href="#i-max"/></svg></button>
    <button class="wb" aria-label="关闭窗口"><svg class="ic"><use href="#i-close"/></svg></button>
  </header>
  <nav class="menu">
    <button class="file">文件</button><button>布局</button><button class="wide">表</button><button class="active">注释</button><button>草绘</button><button class="plugin">AutobuildZ继承迁移</button><button>分析</button><button>审阅</button><button>工具</button><button class="view">视图</button><button>框架</button>
    <span class="tools"><button class="fold" aria-label="折叠"><svg class="ic"><use href="#i-caret"/></svg></button><button class="round" aria-label="搜索"><svg class="ic"><use href="#i-search"/></svg></button><button class="round" aria-label="学习"><svg class="ic"><use href="#i-hat"/></svg></button><button class="arr light" aria-label="学习列表"></button><button class="round help">?</button></span>
  </nav>
  <div class="ribbon">
    <section class="group g-del">
      <div class="body">
        <div class="col"><div class="row"><button class="ib" aria-label="移除角拐"><svg class="ic"><use href="#i-del1"/></svg></button></div><div class="row"><button class="ib" aria-label="移除断点"><svg class="ic"><use href="#i-del2"/></svg></button></div><div class="row"><button class="ib" aria-label="删除"><svg class="ic"><use href="#i-delx"/></svg></button></div></div>
      </div>
      <button class="label drop">删除</button>
    </section>
    <section class="group g-set">
      <div class="body">
        <div class="col"><div class="row"><button class="ib" aria-label="绘制组"><svg class="ic"><use href="#i-shapes"/></svg></button></div><div class="row"><button class="ib" aria-label="编组"><svg class="ic"><use href="#i-grp"/></svg></button><button class="arr dim" aria-label="编组列表"></button></div><div class="row"><button class="ib" aria-label="取消编组"><svg class="ic"><use href="#i-grp"/></svg></button></div></div>
        <div class="col"><div class="row"><button class="ib" aria-label="与视图相关"><svg class="ic"><use href="#i-trigroup"/></svg></button></div><div class="row"><button class="ib" aria-label="与对象相关"><svg class="ic"><use href="#i-grpA"/></svg></button></div></div>
      </div>
      <span class="label">组</span>
    </section>
    <section class="group g-note">
      <div class="body">
        <button class="big model"><svg class="ic32"><use href="#i-model32"/></svg><span>显示模型注释</span></button>
        <i class="vsep"></i>
        <button class="big slim"><svg class="ic32"><use href="#i-dim32"/></svg><span>尺寸</span></button>
        <button class="big"><svg class="ic32"><use href="#i-gtol32"/></svg><span>几何公差</span></button>
        <div class="col"><div class="row"><button class="ib" aria-label="纵坐标"><svg class="ic"><use href="#i-ord"/></svg></button><button class="arr" aria-label="纵坐标列表"></button></div><div class="row"><button class="ib" aria-label="注解"><svg class="ic"><use href="#i-note"/></svg></button><button class="arr" aria-label="注解列表"></button></div><div class="row"><button class="ib" aria-label="表面粗糙度"><svg class="ic"><use href="#i-surf"/></svg></button></div></div>
        <div class="col"><div class="row"><button class="ib" aria-label="自定义符号"><svg class="ic"><use href="#i-folderA"/></svg></button><button class="arr" aria-label="符号列表"></button></div><div class="row"><button class="ib" aria-label="基准特征"><svg class="ic"><use href="#i-abox"/></svg></button></div><div class="row"><button class="ib" aria-label="基准目标"><svg class="ic"><use href="#i-circa"/></svg></button></div></div>
        <div class="col"><div class="row"><button class="ib" aria-label="绘制基准"><svg class="ic"><use href="#i-plane"/></svg></button><button class="arr" aria-label="基准列表"></button></div><div class="row"><button class="ib" aria-label="轴对称线"><svg class="ic"><use href="#i-break"/></svg></button></div></div>
      </div>
      <button class="label drop">注释</button>
    </section>
    <section class="group g-edit">
      <div class="body">
        <button class="big slim"><svg class="ic32"><use href="#i-attach32"/></svg><span>连接</span></button>
        <div class="col"><div class="row"><button class="ib" aria-label="参考"><svg class="ic"><use href="#i-e1"/></svg></button></div><div class="row"><button class="ib" aria-label="移动到视图"><svg class="ic"><use href="#i-e2"/></svg></button></div><div class="row"><button class="ib" aria-label="移动到页面"><svg class="ic"><use href="#i-e3"/></svg></button></div></div>
        <i class="vsep"></i>
        <button class="big off"><svg class="ic32"><use href="#i-align32"/></svg><span>对齐尺寸</span></button>
        <div class="col"><div class="row"><button class="ib" aria-label="角拐"><svg class="ic"><use href="#i-a1"/></svg></button></div><div class="row"><button class="ib" aria-label="断点"><svg class="ic"><use href="#i-a2"/></svg></button></div><div class="row"><button class="ib" aria-label="清理尺寸"><svg class="ic"><use href="#i-a3"/></svg></button></div></div>
      </div>
      <button class="label drop">编辑</button>
    </section>
    <section class="group g-format">
      <div class="body">
        <div class="col"><div class="row"><button class="ib" aria-label="文本样式"><svg class="ic"><use href="#i-fontA"/></svg></button></div><div class="row"><button class="ib" aria-label="线型"><svg class="ic"><use href="#i-pencil"/></svg></button></div></div>
        <i class="vsep"></i>
        <div class="col"><div class="row"><button class="ib" aria-label="箭头样式"><svg class="ic"><use href="#i-flash"/></svg></button><button class="arr" aria-label="箭头列表"></button></div><div class="row"><button class="ib" aria-label="重复格式"><svg class="ic"><use href="#i-fmt"/></svg></button></div><div class="row"><button class="ib" aria-label="超级链接"><svg class="ic"><use href="#i-globelink"/></svg></button></div></div>
      </div>
      <button class="label drop">格式</button>
    </section>
  </div>
  <div class="canvas">
    <svg class="drawing" role="img" aria-label="直径 8">
      <g fill="none" stroke="#fff" shape-rendering="crispEdges"><circle cx="235" cy="268" r="155"/><circle cx="235" cy="268" r="62"/></g>
      <path d="M172.500 266Q173 286 182 301L287 235L402 163.500H513" fill="none" stroke="#ff0" shape-rendering="crispEdges"/>
      <path d="M182 301L200 284L204 292ZM287 235L265 243L270 250Z" fill="#ff0"/>
      <g fill="none" stroke="#ff0" stroke-width="5" stroke-linecap="round"><circle cx="442" cy="123" r="16"/><path d="M449 98L434 147"/></g>
      <text class="dim-text tall" x="467" y="144">8</text>
      <path d="M383 96Q392 92 400 91Q415 90 424 88C431 87 434 83 440 81Q450 79 471 80Q480 85 487 92Q493 108 493 130Q494 150 488 164L486 189Q484 212 475 215Q466 219 440 209Q408 198 395 182Q386 171 384 148Q384 130 387 120C392 112 387 103 394 90" fill="none" stroke="#f00" stroke-width="2" stroke-linecap="round"/>
    </svg>
    <div class="float">
      <button aria-label="重新调整"><svg class="ic"><use href="#i-refit"/></svg></button><button aria-label="放大"><svg class="ic"><use href="#i-zoomin"/></svg></button><button aria-label="缩小"><svg class="ic"><use href="#i-zoomout"/></svg></button><button aria-label="重画"><svg class="ic"><use href="#i-shade"/></svg></button><button class="menu-mark" aria-label="显示样式"><svg class="ic"><use href="#i-cube"/></svg></button><button class="menu-mark" aria-label="视图管理"><svg class="ic"><use href="#i-docgray"/></svg></button><button class="menu-mark" aria-label="基准显示"><svg class="ic"><use href="#i-datum"/></svg></button>
    </div>
    <p class="meta"><span>比例: 1:1</span><span>类型: PART</span><span>名称: PRT0001</span><span>尺寸: A4</span></p>
  </div>
  <div class="sheets">
    <button aria-label="第一页"><svg><use href="#i-first"/></svg></button><button aria-label="上一页"><svg><use href="#i-back"/></svg></button><button aria-label="下一页"><svg><use href="#i-fwd"/></svg></button><button aria-label="最后页"><svg><use href="#i-last"/></svg></button>
    <button class="plus">+</button><button class="sheet">页面 1</button>
  </div>
  <footer class="status">
    <button class="ib" aria-label="导航器"><svg class="ic"><use href="#i-tree"/></svg></button><button class="ib" aria-label="浏览器"><svg class="ic"><use href="#i-globe"/></svg></button><button class="ib sq" aria-label="全屏"><svg class="ic"><use href="#i-square"/></svg></button><i class="sep"></i>
    <p class="msg">将显示着色模型</p><i class="sep"></i>
    <span class="lights"><i></i><i></i><i></i></span><i class="sep"></i>
    <span class="find"><button class="ib" aria-label="查找"><svg class="ic"><use href="#i-binoc"/></svg></button><button class="arr" aria-label="查找列表"></button></span><i class="sep"></i>
    <label class="filter"><select aria-label="过滤器"><option></option></select></label>
    <svg class="grip"><path d="M0 12L12 0M4 12L12 4M8 12L12 8" stroke="#b3b9bc" stroke-width="2"/></svg>
  </footer>
</section>
</main>
<aside class="watermark">
  <svg class="rings" viewBox="0 0 60 60"><path d="M6 2Q16-2 30 12Q45 28 40 39Q36 45 24 38Q6 27 3 14Q2 6 6 2ZM8 5Q5 9 8 17Q13 29 26 36Q36 40 38 35Q40 27 28 14Q15 1 8 5Z" fill="#9fadba"/><path d="M38 19Q50 12 55 18Q60 28 50 42Q38 58 28 53L26 50Q38 52 46 39Q54 26 50 20Q47 17 38 21Z" fill="#e39a9d"/><path d="M20 31Q9 36 10 43Q13 51 23 46" fill="none" stroke="#b5c3cd" stroke-width="2"/></svg>
  <div class="wm-text"><strong>野火论坛</strong><span>www.proewildfire.cn</span></div>
</aside>
</body>
</html>
```
FILE: styles.css
```css
* { box-sizing: border-box; }
body {
  margin: 0;
  background: #b5babd;
  color: #333;
  font: 12px/17px "Noto Sans", "Noto Sans CJK SC", sans-serif;
}
button {
  margin: 0;
  padding: 0;
  border: 0;
  background: none;
  color: inherit;
  font: inherit;
}
p, h1 { margin: 0; }
.sprite { position: absolute; width: 0; height: 0; }
.ic { display: block; width: 16px; height: 16px; flex: none; }
.ic32 { display: block; width: 32px; height: 32px; flex: none; }

/* text inside icons */
.mono-b { font: bold 11px "Liberation Mono", monospace; fill: #333; }
.mono-b.wide-m { font-size: 16px; }
.tiny { font: bold 8px "Liberation Sans", sans-serif; fill: #333; }
.tiny.g { fill: #888; }
.serifA { font: bold 13px "Liberation Serif", serif; fill: #333; }
.fa1 { font: 11px "Liberation Sans", sans-serif; fill: #222; }
.fa2 { font: bold 15px "Liberation Sans", sans-serif; fill: #2389b4; }
.fa3 { font: italic bold 10px "Liberation Serif", serif; fill: #888; }

.desktop {
  display: grid;
  grid-template-columns: 1fr 1fr;
  gap: 8px;
  min-height: 100vh;
  padding: 4px 3px 0 4px;
}
.window {
  display: flex;
  flex-direction: column;
  min-width: 0;
  overflow: hidden;
  background: #f8fafb;
}

.ib {
  display: flex;
  flex: none;
  align-items: center;
  justify-content: center;
  width: 24px;
  height: 24px;
}
.ib.on { background: #dfdfe1; border: 1px solid #a9abad; }
.arr {
  display: flex;
  flex: none;
  align-items: center;
  justify-content: center;
  width: 12px;
  height: 24px;
}
.arr::after, .drop::after {
  content: "";
  border: 4px solid transparent;
  border-top-color: #555;
  border-bottom: 0;
}
.arr.dim::after { border-top-color: #999; }
.arr.light::after { border-top-color: #fff; }

/* title bar */
.titlebar {
  display: flex;
  align-items: center;
  height: 28px;
  padding-right: 3px;
  background: #dae0e0;
}
.titlebar .arr { width: 14px; }
.logo { margin: 0 6px 0 12px; }
.brand {
  width: 51px;
  font: 16px/20px "DejaVu Sans", sans-serif;
  color: #4b5355;
}
.brand sup { font-size: 6px; vertical-align: 6px; line-height: 1px; }
.sep { flex: none; width: 1px; height: 24px; background: #a9afb1; }
.titlebar .sep + .ib { margin-left: 3px; }
.split {
  display: flex;
  flex: none;
  width: 38px;
  height: 24px;
  border: 1px solid #a2a8aa;
  background: #d5dbdb;
}
.split .ib { width: 23px; height: 22px; }
.split .arr { width: 13px; height: 22px; border-left: 1px solid #a2a8aa; }
.titlebar .more { flex-direction: column; gap: 1px; width: 24px; }
.arr.more::before { content: ""; width: 8px; height: 1px; background: #444; }
.caption {
  flex: 1;
  min-width: 0;
  margin: 0 1px 0 8px;
  overflow: hidden;
  white-space: nowrap;
  font-size: 13px;
  font-weight: 400;
  line-height: 20px;
  color: #acb3b5;
}
.wb { display: flex; flex: none; justify-content: center; width: 27px; }

/* menu */
.menu {
  display: flex;
  height: 29px;
  background: #3b4547;
  color: #fff;
  font-size: 13px;
}
.menu > button { flex: none; width: 40px; white-space: nowrap; }
.menu > .file { width: 66px; background: linear-gradient(160deg, #66d343, #51a138); }
.menu > .wide { width: 60px; }
.menu > .plugin { width: 120px; }
.menu > .view { width: 43px; }
.menu > .active { background: #f8fafb; color: #3c7d22; }
.tools { display: flex; flex: 1; align-items: center; justify-content: flex-end; height: 27px; }
.tools button { display: flex; align-items: center; justify-content: center; }
.tools .fold { width: 22px; height: 20px; align-items: flex-start; }
.tools .round { width: 24px; height: 24px; border-radius: 12px; }
.tools .help { font-size: 14px; font-weight: 700; }

/* ribbon */
.ribbon { display: flex; height: 113px; background: #f8fafb; }
.group {
  display: flex;
  flex: none;
  flex-direction: column;
  margin: 2px 0 3px;
  border-right: 1px solid #a9adb0;
}
.body { display: flex; flex: 1; }
.label {
  display: flex;
  align-items: center;
  justify-content: center;
  gap: 4px;
  height: 22px;
}
.col { display: flex; flex: none; flex-direction: column; }
.row { display: flex; align-items: center; height: 28px; }
.group .row:first-child { height: 26px; }
.vsep { flex: none; width: 1px; margin: 5px 0 8px; background: #b2b5b7; }
.big {
  display: flex;
  flex: none;
  flex-direction: column;
  align-items: center;
  gap: 10px;
  width: 50px;
  padding-top: 4px;
}
.slim { width: 44px; }
.narrow span { width: 36px; }
.model { width: 60px; }
.model span { width: 48px; }
.off { color: #aaadaf; }

.g-vis { width: 83px; }
.g-vis .body { gap: 2px; padding-left: 3px; }
.g-orient { width: 283px; }
.g-orient .col { margin-right: 5px; }
.g-orient .vsep { margin-right: 7px; }
.g-model { width: 69px; }
.g-model .body { gap: 2px; padding-left: 3px; }
.g-show { width: 79px; }
.g-show .body { padding-left: 3px; }
.g-win { width: 80px; }
.g-win .body { gap: 5px; padding-left: 4px; }
.g-del { width: 53px; }
.g-del .body { justify-content: center; }
.g-set { width: 69px; }
.g-set .body { padding-left: 3px; }
.g-set .col:last-child { margin-left: 2px; }
.g-note { width: 284px; }
.g-note .vsep { margin-left: 3px; margin-right: 4px; }
.g-note .col { width: 38px; }
.g-note .big + .col { margin-left: 3px; }
.g-edit { width: 162px; }
.g-edit .body { padding-left: 1px; }
.g-edit .vsep { margin-left: 4px; margin-right: 8px; }
.g-edit .off { margin-right: 3px; }
.g-format { width: 80px; }
.g-format .body { gap: 5px; padding-left: 3px; }

/* drawing area */
.canvas {
  display: flex;
  flex: 1;
  flex-direction: column;
  align-items: center;
  justify-content: space-between;
  position: relative;
  min-height: 460px;
  padding-top: 7px;
  background: #33312d;
}
.drawing { position: absolute; top: 0; left: 0; width: 100%; height: 100%; }
.dim-text { font: 100 50px "Open Sans Condensed Light", "Open Sans Condensed", "Roboto Condensed", "Roboto", sans-serif; fill: #ff0; }
.dim-text.tall { font-size: 58px; }
.float {
  display: flex;
  position: relative;
  padding: 2px;
  border: 1px solid #a3a7a9;
  background: #f8fafb;
}
.float button {
  display: flex;
  position: relative;
  align-items: center;
  justify-content: center;
  width: 26px;
  height: 26px;
}
.float .menu-mark { width: 27px; }
.menu-mark::after {
  content: "";
  position: absolute;
  right: 2px;
  bottom: 1px;
  border: 2px solid #555;
  border-top-color: transparent;
  border-left-color: transparent;
}
.meta {
  display: flex;
  align-self: flex-start;
  position: relative;
  gap: 12px;
  padding-left: 9px;
  font: 7px/10px "Liberation Mono", "Noto Sans CJK SC", monospace;
  color: #777571;
}

/* sheet tabs */
.sheets {
  display: flex;
  height: 30px;
  padding-left: 1px;
  border-top: 1px solid #8a8a8a;
  border-bottom: 1px solid #8a8a8a;
  background: linear-gradient(#f6f3f3 3px, #8a8a8a 3px, #8a8a8a 4px, #dfdfdf 4px);
}
.sheets button { display: flex; align-items: center; justify-content: center; width: 16px; margin-top: 3px; }
.sheets svg { width: 12px; height: 10px; }
.sheets button:first-child { width: 20px; }
.sheets button:nth-child(3) { width: 12px; }
.sheets button:nth-child(4) { width: 24px; }
.sheets .plus {
  width: 20px;
  height: 17px;
  margin: 5px 0 0 2px;
  border: 1px solid #8a8a8a;
  font: bold 13px/14px "Liberation Sans", sans-serif;
}
.sheets .sheet {
  width: 70px;
  margin: 3px 0 0;
  padding-bottom: 2px;
  border-right: 1px solid #8a8a8a;
  background: #f5f5f6;
  font-weight: 700;
}

/* status bar */
.status {
  display: flex;
  align-items: center;
  height: 34px;
  padding-left: 7px;
  background: #f5f9fb;
}
.status .sq { width: 28px; margin-right: 6px; }
.status .sep { height: 27px; }
.msg {
  display: flex;
  flex: none;
  align-items: center;
  gap: 8px;
  width: 174px;
  padding-left: 6px;
  font-size: 11px;
}
.msg::before { content: ""; width: 5px; height: 5px; border-radius: 3px; background: #1f6580; }
.lights { display: flex; flex: none; align-items: center; gap: 1px; width: 70px; padding-left: 5px; }
.lights i { width: 6px; height: 6px; border-radius: 3px; background: #ccc; }
.lights i:first-child { width: 11px; height: 11px; border-radius: 6px; background: #4dd04b; }
.find {
  display: flex;
  flex: none;
  height: 24px;
  margin: 0 2px;
  border: 1px solid #b6babd;
  background: #fafcfd;
}
.find .ib { width: 27px; height: 22px; }
.find .arr { width: 14px; height: 22px; border-left: 1px solid #b6babd; }
.filter { display: flex; position: relative; width: 177px; height: 24px; margin-left: auto; }
.filter select {
  width: 100%;
  padding: 0 7px;
  border: 1px solid #a9adb0;
  border-radius: 0;
  appearance: none;
  background: #fafcfd;
  color: #333;
  font: inherit;
}
.filter::after {
  content: "";
  position: absolute;
  top: 10px;
  right: 5px;
  border: 4px solid transparent;
  border-top-color: #555;
  border-bottom: 0;
}
.filter::before {
  content: "";
  position: absolute;
  top: 1px;
  right: 15px;
  width: 1px;
  height: 22px;
  background: #a9adb0;
}
.grip { flex: none; align-self: flex-end; width: 12px; height: 12px; margin: 0 3px 2px; }

/* forum mark over the corner */
.watermark {
  display: flex;
  position: fixed;
  right: 5px;
  bottom: 0;
  width: 206px;
  height: 67px;
  background: rgba(255, 255, 255, .35);
  pointer-events: none;
}
.rings { flex: none; width: 60px; height: 60px; margin-top: 4px; }
.wm-text { display: flex; flex-direction: column; align-items: center; margin-left: -2px; }
.wm-text strong {
  font: 700 29px/38px "Noto Sans CJK SC", sans-serif;
  color: #8cc7a4;
}
.wm-text span { font-size: 15px; font-weight: 300; line-height: 20px; color: #b5deda; }
```
